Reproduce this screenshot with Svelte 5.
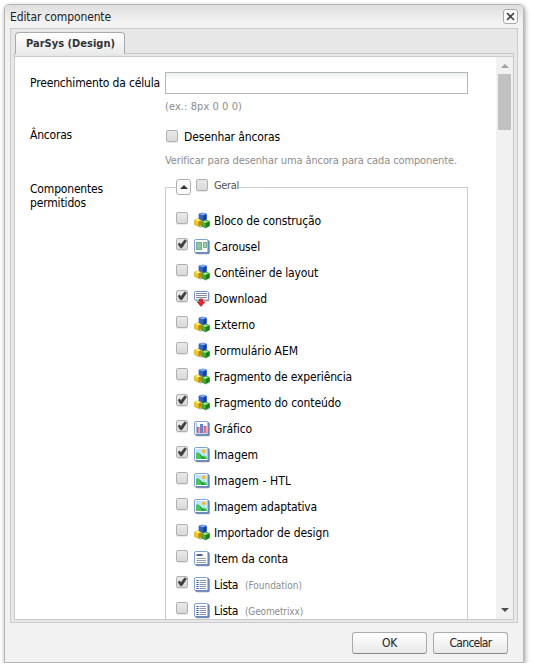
<script>
  const items = [
    { label: 'Bloco de construção', icon: 'cubes', w: 107 },
    { label: 'Carousel', icon: 'carousel', on: true, w: 46 },
    { label: 'Contêiner de layout', icon: 'cubes', w: 104 },
    { label: 'Download', icon: 'download', on: true, w: 53 },
    { label: 'Externo', icon: 'cubes', w: 41 },
    { label: 'Formulário AEM', icon: 'cubes', w: 84 },
    { label: 'Fragmento de experiência', icon: 'cubes', w: 138 },
    { label: 'Fragmento do conteúdo', icon: 'cubes', on: true, w: 127 },
    { label: 'Gráfico', icon: 'chart', on: true, w: 38 },
    { label: 'Imagem', icon: 'image', on: true, w: 44 },
    { label: 'Imagem - HTL', icon: 'image', w: 77 },
    { label: 'Imagem adaptativa', icon: 'image', w: 103 },
    { label: 'Importador de design', icon: 'cubes', w: 115 },
    { label: 'Item da conta', icon: 'item', w: 74 },
    { label: 'Lista', group: '(Foundation)', icon: 'list', on: true, w: 24, gw: 57 },
    { label: 'Lista', group: '(Geometrixx)', icon: 'list', w: 24, gw: 58 }
  ];

  // Tunes letter spacing so a label occupies its measured column width.
  function fit(node, width) {
    const natural = node.getBoundingClientRect().width;
    node.style.letterSpacing = (width - natural) / node.textContent.length + 'px';
  }
</script>

{#snippet check(on)}
  <span class="check">
    {#if on}
      <svg width="12" height="12" viewBox="0 0 12 12"><path d="M2 6 3.6 5 5 6.4 8.6 1.8 10.6 2.8 6 9.8 4.4 9.8Z" fill="#3e3e3e" stroke="#3e3e3e" stroke-width=".5" /></svg>
    {/if}
  </span>
{/snippet}

{#snippet glyph(kind)}
  <svg class="glyph" width="17" height="17" viewBox="0 0 17 17">
    {#if kind === 'cubes'}
      <path d="M2 13 6 15.5 9 15 12 16.5 16 14.5V10l-3-2H9Z" fill="#666" opacity=".5" />
      <g stroke-linejoin="round" stroke-width=".8">
        <path d="M5 2 9 1 12.3 2V7.5L9 9 5 7.5Z" fill="#2b66cf" stroke="#2b66cf" />
        <path d="M5 2 9 1 12.3 2 9 3.3Z" fill="#86b5f3" />
        <path d="M9.2 3.5 12.5 2.2V7.6L9.2 9Z" fill="#173f9c" />
        <path d="M.6 8 3.4 7 7.2 8.2v4.6L4.3 14.3.6 12.5Z" fill="#f0c918" stroke="#dfb300" />
        <path d="M.8 8 3.4 7 7 8.2 4.3 9.5Z" fill="#fff590" />
        <path d="M4.5 9.6 7.4 8.3V12.8L4.5 14.2Z" fill="#b28708" />
        <path d="M8 9.8 11.5 8.3 15.2 9.2v4.4l-3.8 2L8 14.2Z" fill="#41b435" stroke="#329827" />
        <path d="M8.1 9.8 11.5 8.4 15 9.2 11.5 11Z" fill="#a3e67e" />
        <path d="M11.7 11.2 15.3 9.4V13.6l-3.6 1.9Z" fill="#1b7d1c" />
      </g>
    {:else if kind === 'download'}
      <rect x="1.5" y="2.5" width="14" height="9" rx="1" fill="#6f747c" opacity=".6" />
      <rect x=".5" y="1.5" width="14" height="8.5" rx="1" fill="#fff" stroke="#7396d0" />
      <path d="M2 3.5h11M2 5.5h11M2 7.5h11" stroke="#858d9b" />
      <path d="M5.5 9h3v3h2.2L7 16.4 3.3 12h2.2Z" fill="#ef2724" stroke="#a51620" stroke-width=".7" />
    {:else}
      <rect x="1.8" y="2.3" width="14" height="14" rx="1.5" fill="#555b66" opacity=".65" />
      <rect x=".5" y="1.5" width="13.7" height="13.3" rx="1.5" fill="#fff" stroke="#7ea2dc" />
      <path d="M14.2 2.5v12.3H1.5" fill="none" stroke="#5379bc" />
      {#if kind === 'carousel'}
        <path d="M2 4h6v8H2Z" fill="#6dae86" /><path d="M3 5h4v6H3Z" fill="#91c3a4" />
        <path d="M9.5 4.5h3v5h-3Z" fill="#a8d2b7" stroke="#6dae86" />
      {:else if kind === 'chart'}
        <path d="M2.5 3v10H13" fill="none" stroke="#b0b6c4" />
        <path d="M3 7h2.5v6H3Z" fill="#e4515e" /><path d="M6 4h3v9H6Z" fill="#5e85d9" /><path d="M9.5 6h3v7h-3Z" fill="#e4515e" />
        <path d="M4 8h1v5H4ZM10.5 7h1v6h-1Z" fill="#f3858a" />
      {:else if kind === 'image'}
        <rect x="2" y="3" width="10.8" height="10" fill="#bce7f9" />
        <path d="M2 7 4 6 8.5 10.5 10 9.5 12.8 11v2H2Z" fill="#4cc652" />
        <path d="M5 7 8.5 10.5 12 13H8Z" fill="#1c9950" />
        <circle cx="9.8" cy="5.3" r="1.9" fill="#ffb629" />
      {:else if kind === 'item'}
        <path d="M2.5 5h6" stroke="#4f6598" stroke-width="2" />
        <path d="M2.5 8.5H12M2.5 10.5H12M2.5 12.5H12" stroke="#969eac" />
      {:else}
        <path d="M2.5 4.5h2M2.5 6.5h2M2.5 8.5h2M2.5 10.5h2M2.5 12.5h2" stroke="#294d91" />
        <path d="M5.5 4.5H12M5.5 6.5H12M5.5 8.5H12M5.5 10.5H12M5.5 12.5H12" stroke="#8998b3" />
      {/if}
    {/if}
  </svg>
{/snippet}

<div class="dialog">
  <header>
    <span use:fit={101}>Editar componente</span>
    <button class="close" aria-label="Fechar"><svg width="13" height="13" viewBox="0 0 13 13"><path d="m3 3 7 7m0-7-7 7" stroke="#444" stroke-width="1.7" /></svg></button>
  </header>
  <section class="panel">
    <div class="tabs"><div class="tab"><b use:fit={89}>ParSys (Design)</b></div></div>
    <div class="body">
      <div class="form">
        <div class="field padding">
          <div class="name"><span use:fit={130}>Preenchimento da célula</span></div>
          <div class="control"><input aria-label="Preenchimento da célula" /><div class="hint"><span use:fit={77}>(ex.: 8px 0 0 0)</span></div></div>
        </div>
        <div class="field anchors">
          <div class="name"><span use:fit={42}>Âncoras</span></div>
          <div class="control"><div class="anchor">{@render check(false)}<span use:fit={96}>Desenhar âncoras</span></div><div class="hint"><span use:fit={292}>Verificar para desenhar uma âncora para cada componente.</span></div></div>
        </div>
        <div class="field">
          <div class="name allowed"><span use:fit={73}>Componentes</span><br /><span use:fit={56}>permitidos</span></div>
          <div class="group">
            <div class="legend"><i class="lead"></i><button class="toggle" aria-label="Recolher"><i></i></button>{@render check(false)}<span class="geral"><span use:fit={25}>Geral</span></span><i class="rule"></i></div>
            <div class="items">
              {#each items as item}
                <div class="item">
                  {@render check(item.on)}
                  {@render glyph(item.icon)}
                  <span class="label"><span use:fit={item.w}>{item.label}</span></span>
                  {#if item.group}<small><span use:fit={item.gw}>{item.group}</span></small>{/if}
                </div>
              {/each}
            </div>
          </div>
        </div>
      </div>
      <div class="scroll"><i class="up"></i><div class="thumb"></div><i class="down"></i></div>
    </div>
  </section>
  <footer><button><span use:fit={15}>OK</span></button><button><span use:fit={42}>Cancelar</span></button></footer>
</div>

<style>
  :global(body) { background: #fff; }
  :global(#app) { padding-top: 4px; }
  .dialog, .dialog * { box-sizing: border-box; }
  .dialog { width: 520px; height: 659px; margin-left: 4px; display: flex; flex-direction: column; border: 1px solid #b5b5b5; border-radius: 5px 5px 0 0; background: #f2f2f2; box-shadow: 1px 2px 5px #999; padding: 0 5px; font: 12px/14px Tahoma, "DejaVu Sans Condensed", "Noto Sans", sans-serif; color: #000; white-space: nowrap; }
  header { height: 23px; flex: none; margin: 0 -5px; padding: 4px 5px 0; display: flex; justify-content: space-between; background: linear-gradient(#dedede, #f3f3f3 75%); border-radius: 4px 4px 0 0; color: #222; }
  header > span { margin-top: 1px; height: 14px; }
  button { font: inherit; padding: 0; }
  .close { width: 15px; height: 15px; border: 1px solid #aaa; border-radius: 3px; background: #fafafa; display: flex; }
  .close svg { flex: none; }
  .panel { width: 508px; height: 595px; flex: none; background: #e7e7e7; border: 1px solid #ccc; padding: 3px 3px 2px; display: flex; flex-direction: column; }
  .tabs { height: 22px; flex: none; padding-left: 1px; border-bottom: 1px solid #c8c8c8; }
  .tab { width: 110px; height: 22px; border: 1px solid #aaa; border-bottom: 0; border-radius: 4px 4px 0 0; background: linear-gradient(#fff, #eaeaea); padding: 4px 0 0 10px; font: bold 11px/14px Tahoma, "DejaVu Sans Condensed", sans-serif; color: #333; }
  .body { height: 566px; flex: none; border: 1px solid #c8cac9; border-top: 0; display: flex; padding-top: 2px; }
  .form { width: 481px; height: 563px; overflow: hidden; border-top: 1px solid #ccc; background: #fff; padding: 15px 0 0 15px; }
  .field { display: flex; }
  .name { width: 135px; flex: none; line-height: 14px; padding-top: 4px; }
  .padding { height: 53px; }
  .anchors { height: 54px; }
  .anchors .name, .name.allowed { padding-top: 3px; }
  .control input { display: block; width: 303px; height: 22px; border: 1px solid #b5b8b8; background: linear-gradient(#edf0f0, #fff 7px); padding: 0; margin: 0; border-radius: 0; }
  .hint { font-size: 11px; line-height: 14px; color: #8d8d8d; margin-top: 6px; }
  .anchor { height: 14px; margin-top: 4px; display: flex; align-items: center; gap: 6px; padding-left: 1px; }
  .anchor > span:last-child { position: relative; top: 1px; }
  .anchors .hint { margin-top: 11px; }
  .check { display: block; width: 12px; height: 12px; flex: none; border: 1px solid #b0b0b0; border-radius: 2px; background: linear-gradient(#e9e9e9, #d9d9d9); box-shadow: 0 1px 0 #e7e7e7; }
  .check svg { display: block; margin: -1px 0 0 -1px; }
  .group { width: 303px; height: 460px; }
  .legend { height: 17px; display: flex; align-items: flex-start; }
  .lead { width: 11px; height: 9px; margin-top: 8px; border-top: 1px solid #ccc; border-left: 1px solid #ccc; }
  .toggle { width: 15px; height: 16px; border: 1px solid #b0b0b0; border-radius: 3px; background: #fafafa; display: flex; align-items: center; justify-content: center; }
  .toggle i { border: 4px solid transparent; border-top: 0; border-bottom-color: #333; }
  .legend > .check { margin-left: 5px; }
  .geral { font-size: 11px; line-height: 14px; color: #555; padding-left: 6px; width: 31px; }
  .rule { flex: 1; height: 9px; margin-top: 8px; border: 1px solid #ccc; border-width: 1px 1px 0 0; }
  .items { border: 1px solid #ccc; border-width: 0 1px; padding: 15px 0 0 10px; height: 460px; }
  .item { display: flex; height: 26px; align-items: flex-start; padding-top: 1px; }
  .glyph { display: block; flex: none; margin-left: 6px; }
  .label { margin: 2px 0 0 3px; }
  small { margin: 3px 0 0 7px; color: #8d8d8d; font-size: 10px; line-height: 14px; }
  .scroll { width: 17px; height: 563px; background: #f1f1f1; border-top: 1px solid #ccc; display: flex; flex-direction: column; align-items: center; padding-top: 7px; }
  .up { border: 4px solid transparent; border-top: 0; border-bottom-color: #a2a2a2; }
  .thumb { width: 13px; height: 56px; background: #c1c1c1; margin-top: 6px; flex: none; }
  .down { border: 4px solid transparent; border-bottom: 0; border-top-color: #505050; margin: auto 0 7px; }
  footer { display: flex; justify-content: flex-end; gap: 6px; padding: 9px 10px 0 0; }
  footer button { width: 75px; height: 22px; border: 1px solid #aaa; border-bottom-color: #888; border-radius: 3px; background: linear-gradient(#fff, #e9e9e9); color: #222; }
</style>
